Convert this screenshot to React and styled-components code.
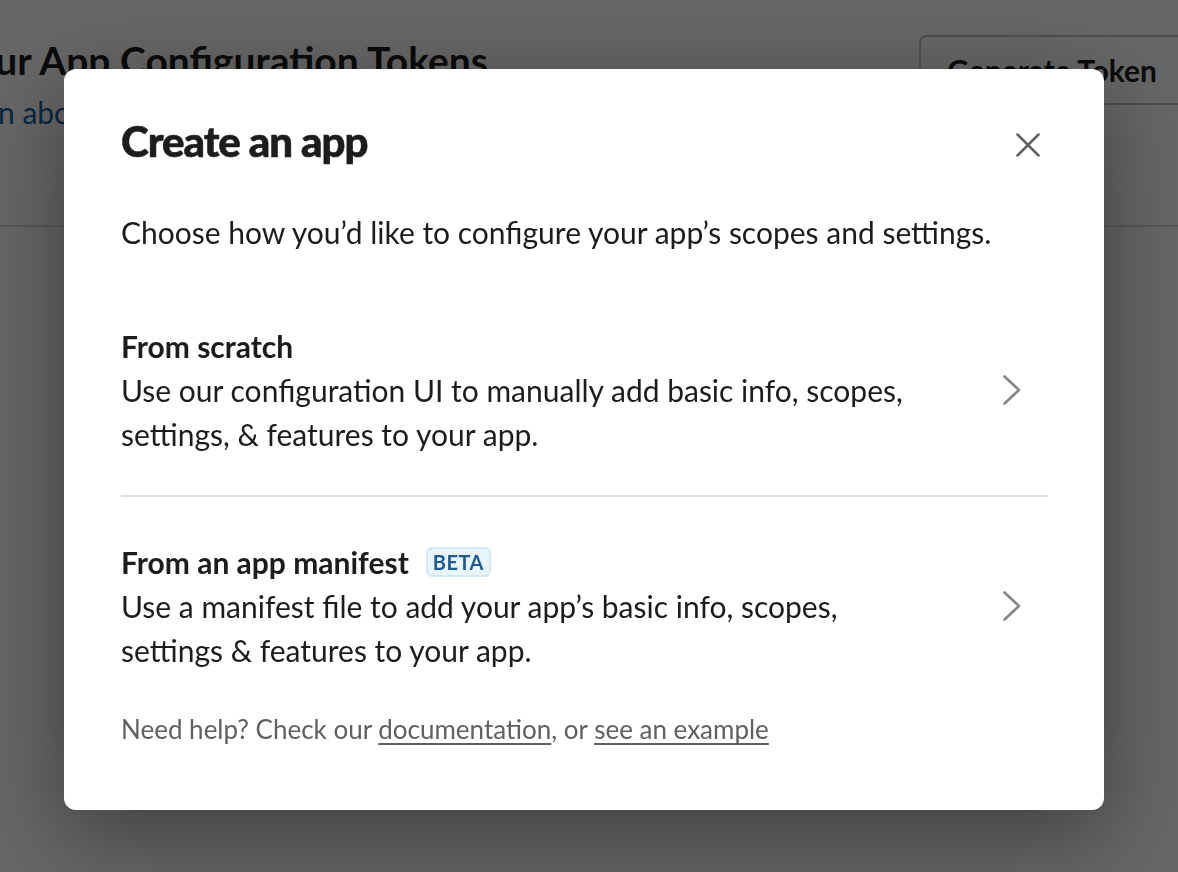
import styled, { createGlobalStyle } from "styled-components";

const GlobalStyle = createGlobalStyle`
  html, body {
    margin: 0;
    padding: 0;
    height: 100%;
    overflow: hidden;
    background: #ffffff;
    font-family: Lato, "Noto Sans", "Liberation Sans", sans-serif;
    color: #1d1c1d;
  }
  * { box-sizing: border-box; }
`

function ChevronIcon() {
    return (
        <svg width="20" height="30" viewBox="0 0 20 30" fill="none">
            <path d="M2.5 1.5 L17 15 L2.5 28.5" stroke="#868686" strokeWidth="2.6" strokeLinecap="round" strokeLinejoin="round" />
        </svg>
    )
}

function CloseIcon() {
    return (
        <svg width="24" height="24" viewBox="0 0 24 24" fill="none">
            <path d="M1.5 1.5 L22.5 22.5 M22.5 1.5 L1.5 22.5" stroke="#616061" strokeWidth="2.5" strokeLinecap="round" />
        </svg>
    )
}

export default function App() {
    return (
        <>
            <GlobalStyle />
            <Page>
                <PageHeader>
                    <div>
                        <PageTitle>Your App Configuration Tokens</PageTitle>
                        <PageLink>Learn about tokens</PageLink>
                    </div>
                    <GenerateButton>Generate Token</GenerateButton>
                </PageHeader>
            </Page>
            <Overlay>
                <Modal role="dialog">
                    <ModalHeader>
                        <ModalTitle>Create an app</ModalTitle>
                        <CloseButton aria-label="Close"><CloseIcon /></CloseButton>
                    </ModalHeader>
                    <Intro>Choose how you’d like to configure your app’s scopes and settings.</Intro>
                    <Option divider>
                        <OptionText>
                            <OptionTitle>From scratch</OptionTitle>
                            <OptionDesc>Use our configuration UI to manually add basic info, scopes, settings, &amp; features to your app.</OptionDesc>
                        </OptionText>
                        <ChevronBox><ChevronIcon /></ChevronBox>
                    </Option>
                    <Option>
                        <OptionText>
                            <OptionTitle>
                                From an app manifest
                                <Badge>BETA</Badge>
                            </OptionTitle>
                            <OptionDesc>Use a manifest file to add your app’s basic info, scopes, settings &amp; features to your app.</OptionDesc>
                        </OptionText>
                        <ChevronBox><ChevronIcon /></ChevronBox>
                    </Option>
                    <Help>
                        Need help? Check our <HelpLink href="#">documentation</HelpLink>, or <HelpLink href="#">see an example</HelpLink>
                    </Help>
                </Modal>
            </Overlay>
        </>
    )
}

const Page = styled.div`
    width: 1233px;
    height: 100vh;
    margin-left: -48px;
`
const PageHeader = styled.header`
    display: flex;
    justify-content: space-between;
    align-items: flex-start;
    padding-top: 34px;
    height: 227px;
    border-bottom: 2px solid #dddddd;
`
const PageTitle = styled.h1`
    margin: 0;
    font-size: 39px;
    font-weight: 700;
    line-height: 52px;
    color: #1d1c1d;
`
const PageLink = styled.a`
    display: block;
    margin: 4px 0 0 -10px;
    font-size: 30px;
    line-height: 44px;
    color: #1264a3;
`
const GenerateButton = styled.button`
    height: 70px;
    margin-top: 1px;
    padding: 0 26px;
    border: 2px solid #c4c4c4;
    border-radius: 8px;
    background: #ffffff;
    font-family: Lato, "Noto Sans", sans-serif;
    font-size: 30px;
    font-weight: 700;
    color: #1d1c1d;
`
const Overlay = styled.div`
    position: fixed;
    inset: 0;
    background: rgba(0, 0, 0, 0.6);
    display: flex;
    align-items: flex-start;
    justify-content: flex-start;
    padding: 69px 0 0 64px;
`
const Modal = styled.div`
    width: 1040px;
    height: 741px;
    background: #ffffff;
    border-radius: 12px;
    box-shadow: 0 24px 90px rgba(0, 0, 0, 0.4);
    padding: 36px 56px 0 57px;
    display: flex;
    flex-direction: column;
`
const ModalHeader = styled.div`
    display: flex;
    justify-content: space-between;
    align-items: center;
    height: 72px;
`
const ModalTitle = styled.h1`
    margin: 0;
    font-size: 42px;
    font-weight: 900;
    letter-spacing: -1px;
    line-height: 1;
    color: #1d1c1d;
    -webkit-text-stroke: 0.6px #1d1c1d;
`
const CloseButton = styled.button`
    width: 40px;
    height: 40px;
    margin-top: 8px;
    padding: 0;
    border: none;
    background: none;
    display: flex;
    align-items: center;
    justify-content: center;
    cursor: pointer;
`
const Intro = styled.p`
    margin: 33px 0 0;
    font-size: 30px;
    line-height: 44px;
`
const Option = styled.div`
    display: flex;
    align-items: center;
    justify-content: space-between;
    padding: ${props => props.divider ? "40px 0 39px" : "43px 0 39px"};
    border-bottom: ${props => props.divider ? "2px solid #dddddd" : "none"};
    margin-top: ${props => props.divider ? "30px" : "0"};
    cursor: pointer;
`
const OptionText = styled.div`
    max-width: 800px;
`
const OptionTitle = styled.div`
    display: flex;
    align-items: center;
    font-size: 30px;
    font-weight: 700;
    line-height: 44px;
`
const OptionDesc = styled.div`
    font-size: 30px;
    line-height: 44px;
`
const Badge = styled.span`
    margin-left: 17px;
    height: 30px;
    padding: 0 5px;
    display: inline-flex;
    align-items: center;
    border: 2px solid #d3e8f5;
    border-radius: 6px;
    background: #e8f5fa;
    color: #1d5a96;
    font-size: 20px;
    font-weight: 700;
    letter-spacing: 0.5px;
`
const ChevronBox = styled.div`
    display: flex;
    align-items: center;
    margin-right: 26px;
`
const Help = styled.p`
    margin: 0;
    font-size: 26px;
    line-height: 36px;
    color: #616061;
`
const HelpLink = styled.a`
    color: #616061;
    text-decoration: underline;
    text-underline-offset: 4px;
`
